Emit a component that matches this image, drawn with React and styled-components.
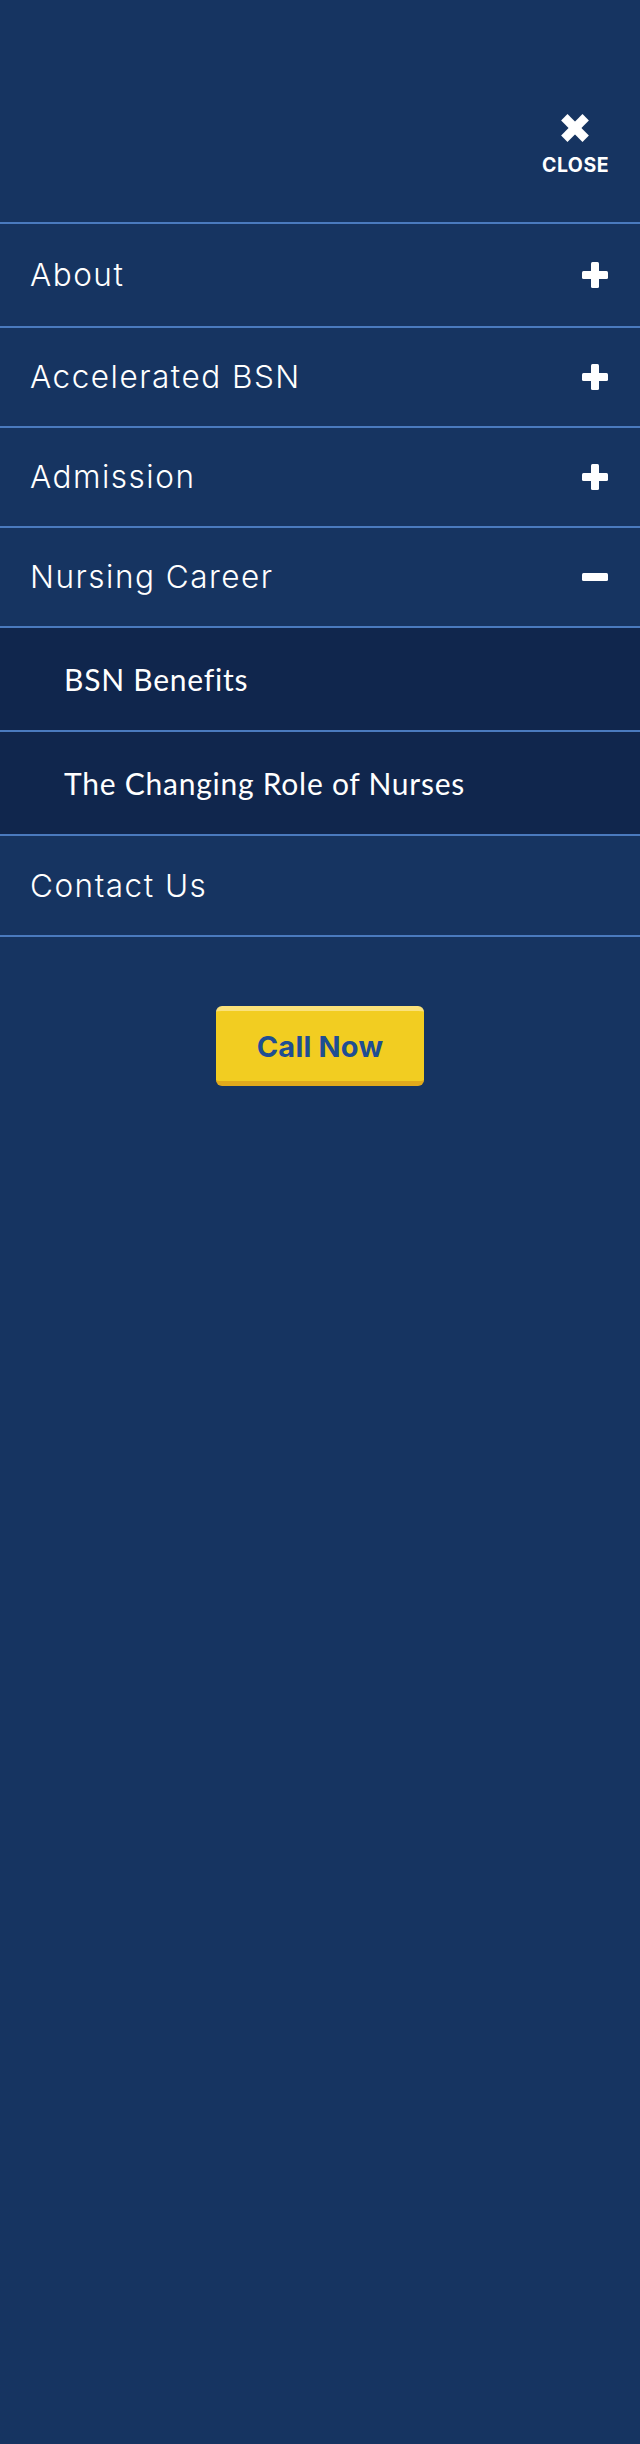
import React from "react";
import styled, { createGlobalStyle } from "styled-components";

const NAVY = "#163461";
const NAVY_DARK = "#10264d";
const LINE = "#4a7abe";

const GlobalStyle = createGlobalStyle`
  html, body {
    margin: 0;
    padding: 0;
    background: ${NAVY};
  }
  body {
    font-family: Inter, "Liberation Sans", sans-serif;
    -webkit-font-smoothing: antialiased;
  }
  * { box-sizing: border-box; }
`;

const Panel = styled.nav`
  min-height: 2444px;
  background: ${NAVY};
  display: flex;
  flex-direction: column;
`;

const Header = styled.header`
  height: 224px;
  display: flex;
  justify-content: flex-end;
  align-items: flex-start;
  padding: 113px 31px 0 0;
  border-bottom: 2px solid ${LINE};
`;

const CloseButton = styled.button`
  display: flex;
  flex-direction: column;
  align-items: center;
  gap: 15px;
  background: none;
  border: 0;
  padding: 0;
  color: #fff;
  cursor: pointer;
`;

const CloseLabel = styled.span`
  font-family: Inter, "Liberation Sans", sans-serif;
  font-weight: 700;
  font-size: 19.5px;
  line-height: 14px;
  letter-spacing: 0.5px;
  color: #fff;
`;

const MenuList = styled.ul`
  list-style: none;
  margin: 0;
  padding: 0;
`;

const Row = styled.li`
  height: ${(p) => p.$h}px;
  display: flex;
  align-items: center;
  justify-content: space-between;
  padding: 0 32px 0 ${(p) => (p.$sub ? 64 : 30)}px;
  background: ${(p) => (p.$sub ? NAVY_DARK : NAVY)};
  border-bottom: 2px solid ${LINE};
`;

const TopLabel = styled.a`
  font-family: Inter, "Liberation Sans", sans-serif;
  font-weight: 300;
  font-size: 31.5px;
  letter-spacing: 1.5px;
  color: #fff;
  text-decoration: none;
  line-height: 1;
`;

const SubLabel = styled.a`
  font-family: Lato, "Liberation Sans", sans-serif;
  font-weight: 400;
  font-size: 30px;
  letter-spacing: 0.75px;
  color: #fff;
  text-decoration: none;
  line-height: 1;
`;

const Toggle = styled.span`
  display: flex;
  width: 26px;
  height: 26px;
  align-items: center;
  justify-content: center;
`;

const CallWrap = styled.div`
  display: flex;
  justify-content: center;
  padding-top: 69px;
`;

const CallButton = styled.a`
  width: 208px;
  height: 80px;
  display: flex;
  align-items: center;
  justify-content: center;
  background: #f2cd21;
  border-top: 5px solid #fbe27a;
  border-bottom: 5px solid #e1a91b;
  border-radius: 6px;
  font-family: Inter, "Liberation Sans", sans-serif;
  font-weight: 700;
  font-size: 29px;
  letter-spacing: 0.2px;
  color: #1f4e92;
  text-decoration: none;
`;

const XIcon = () => (
  <svg width="30" height="30" viewBox="0 0 30 30" aria-hidden="true">
    <g stroke="#fff" strokeWidth="9" strokeLinecap="butt">
      <line x1="4.3" y1="4.3" x2="25.7" y2="25.7" />
      <line x1="25.7" y1="4.3" x2="4.3" y2="25.7" />
    </g>
  </svg>
);

const PlusIcon = () => (
  <svg width="26" height="26" viewBox="0 0 26 26" aria-hidden="true">
    <rect x="9" y="0" width="8" height="26" rx="1.5" fill="#fff" />
    <rect x="0" y="9" width="26" height="8" rx="1.5" fill="#fff" />
  </svg>
);

const MinusIcon = () => (
  <svg width="26" height="26" viewBox="0 0 26 26" aria-hidden="true">
    <rect x="0" y="9" width="26" height="8" rx="1.5" fill="#fff" />
  </svg>
);

const items = [
  { label: "About", h: 104, toggle: "plus" },
  { label: "Accelerated BSN", h: 100, toggle: "plus" },
  { label: "Admission", h: 100, toggle: "plus" },
  { label: "Nursing Career", h: 100, toggle: "minus" },
  { label: "BSN Benefits", h: 104, sub: true },
  { label: "The Changing Role of Nurses", h: 104, sub: true },
  { label: "Contact Us", h: 101 },
];

export default function App() {
  return (
    <>
      <GlobalStyle />
      <Panel>
        <Header>
          <CloseButton>
            <XIcon />
            <CloseLabel>CLOSE</CloseLabel>
          </CloseButton>
        </Header>
        <MenuList>
          {items.map((it) => (
            <Row key={it.label} $h={it.h} $sub={it.sub}>
              {it.sub ? (
                <SubLabel href="#">{it.label}</SubLabel>
              ) : (
                <TopLabel href="#">{it.label}</TopLabel>
              )}
              {it.toggle && (
                <Toggle>{it.toggle === "plus" ? <PlusIcon /> : <MinusIcon />}</Toggle>
              )}
            </Row>
          ))}
        </MenuList>
        <CallWrap>
          <CallButton href="#">Call Now</CallButton>
        </CallWrap>
      </Panel>
    </>
  );
}
